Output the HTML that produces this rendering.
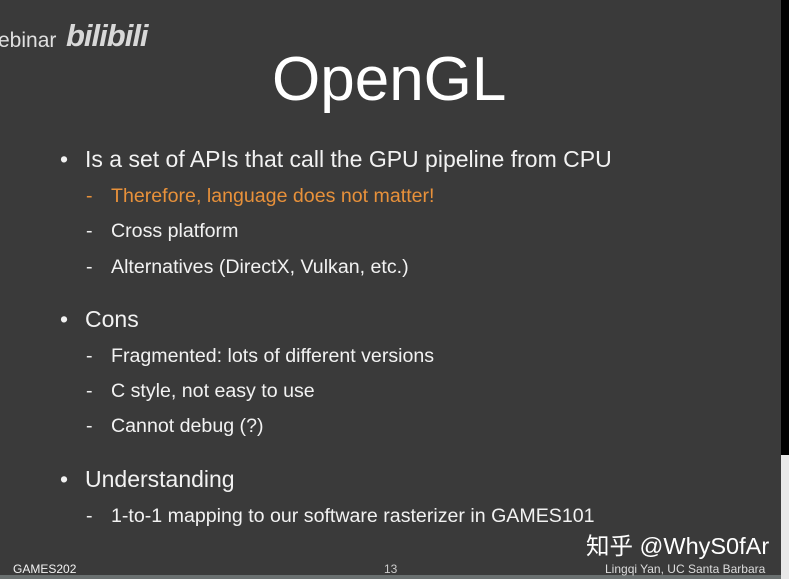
<!DOCTYPE html>
<html><head><meta charset="utf-8"><style>
body{margin:0;width:789px;height:579px;overflow:hidden;background:#3a3a3a;font-family:"Liberation Sans","Noto Sans CJK SC",sans-serif;color:#f2f2f2;position:relative}
.a{position:absolute;white-space:nowrap}
.b{font-size:23px}
.s{font-size:19.6px}
.d{display:inline-block;width:25px}
.p{display:inline-block;width:25px}
</style></head><body>
<div class="a" style="left:781px;top:0;width:8px;height:455px;background:#000"></div>
<div class="a" style="left:781px;top:455px;width:8px;height:124px;background:#e8e8e8"></div>
<div class="a" style="left:0;top:575px;width:781px;height:4px;background:#6a7070"></div>
<div class="a" style="left:-2px;top:29px;font-size:21px;color:#e0e0e0">ebinar</div>
<div class="a" style="left:66px;top:18px;font-size:31px;font-weight:bold;color:#d8d8d8;letter-spacing:-1px;font-style:italic">bilibili</div>
<div class="a" style="left:272px;top:44px;font-size:62px;color:#fff">OpenGL</div>
<div class="a b" style="left:60px;top:146px"><span class="p">•</span>Is a set of APIs that call the GPU pipeline from CPU</div>
<div class="a s" style="left:86px;top:185px;color:#e8913a"><span class="d">-</span>Therefore, language does not matter!</div>
<div class="a s" style="left:86px;top:220px"><span class="d">-</span>Cross platform</div>
<div class="a s" style="left:86px;top:256px"><span class="d">-</span>Alternatives (DirectX, Vulkan, etc.)</div>
<div class="a b" style="left:60px;top:306px"><span class="p">•</span>Cons</div>
<div class="a s" style="left:86px;top:345px"><span class="d">-</span>Fragmented: lots of different versions</div>
<div class="a s" style="left:86px;top:380px"><span class="d">-</span>C style, not easy to use</div>
<div class="a s" style="left:86px;top:415px"><span class="d">-</span>Cannot debug (?)</div>
<div class="a b" style="left:60px;top:466px"><span class="p">•</span>Understanding</div>
<div class="a s" style="left:86px;top:505px"><span class="d">-</span>1-to-1 mapping to our software rasterizer in GAMES101</div>
<div class="a" style="left:13px;top:562px;font-size:12px">GAMES202</div>
<div class="a" style="left:384px;top:562px;font-size:12px;color:#ccc">13</div>
<div class="a" style="left:605px;top:562px;font-size:12px;color:#ddd">Lingqi Yan, UC Santa Barbara</div>
<div class="a" style="left:586px;top:527px;font-size:23.5px;color:#fff">知乎 @WhyS0fAr</div>
</body></html>
